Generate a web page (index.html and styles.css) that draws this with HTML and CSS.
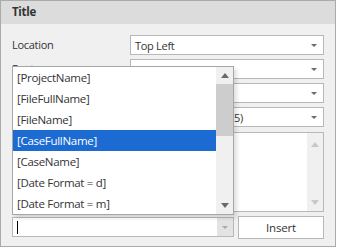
FILE: index.html
```html
<!DOCTYPE html>
<html lang="en">
<head>
    <meta charset="UTF-8">
    <title>Title Settings</title>
    <link rel="stylesheet" href="styles.css">
</head>
<body>
    <div class="panel">
        <div class="panel-header">Title</div>
        <div class="panel-body">
            <div class="form-grid">
                <label class="field-label">Location</label>
                <div class="combo"><span class="combo-text">Top Left</span><span class="arrow"></span></div>

                <label class="field-label">Font</label>
                <div class="combo"><span class="combo-text">Arial [10]</span><span class="arrow"></span></div>

                <label class="field-label"></label>
                <div class="combo"><span class="combo-text"></span><span class="arrow"></span></div>

                <label class="field-label"></label>
                <div class="combo"><span class="combo-text">Default (255, 255, 255)</span><span class="arrow"></span></div>
            </div>

            <div class="memo">
                <div class="memo-scroll">
                    <span class="tri-up light"></span>
                    <span class="tri-down light"></span>
                </div>
            </div>

            <div class="bottom-row">
                <div class="combo combo-edit">
                    <span class="caret"></span>
                    <span class="combo-btn"><span class="arrow light"></span></span>
                </div>
                <button class="insert-btn">Insert</button>
            </div>

            <!-- open dropdown list of the field combo -->
            <div class="popup">
                <ul class="popup-list">
                    <li>[ProjectName]</li>
                    <li>[FileFullName]</li>
                    <li>[FileName]</li>
                    <li class="selected">[CaseFullName]</li>
                    <li>[CaseName]</li>
                    <li>[Date Format = d]</li>
                    <li>[Date Format = m]</li>
                </ul>
                <div class="popup-scroll">
                    <span class="scroll-btn"><span class="tri-up"></span></span>
                    <span class="thumb"></span>
                    <span class="scroll-track"></span>
                    <span class="scroll-btn"><span class="tri-down"></span></span>
                </div>
            </div>
        </div>
    </div>
</body>
</html>
```

FILE: styles.css
```css
body {
    margin: 0;
    font-family: "Open Sans", "Noto Sans", sans-serif;
    font-size: 11px;
    letter-spacing: -0.3px;
    color: #333;
    background: #fff;
}
.panel {
    width: 334px;
    height: 245px;
    border: 1px solid #ababab;
    background: #f0f0f0;
}
.panel-header {
    height: 23px;
    line-height: 22px;
    padding-left: 11px;
    background: #dcdcdc;
    font-weight: bold;
    font-size: 11.5px;
    color: #333;
}
.panel-body {
    position: relative;
    padding: 11px 11px 0 11px;
}
.form-grid {
    display: grid;
    grid-template-columns: 118px 194px;
    row-gap: 4px;
}
.field-label {
    line-height: 20px;
    color: #333;
}
.combo {
    height: 18px;
    border: 1px solid #b8b8b8;
    background: #fff;
    display: flex;
    align-items: center;
    padding-left: 4px;
}
.combo-text {
    flex: 1;
    white-space: nowrap;
    overflow: hidden;
}
.arrow {
    width: 0;
    height: 0;
    margin-right: 6px;
    border-left: 3.5px solid transparent;
    border-right: 3.5px solid transparent;
    border-top: 3.5px solid #6a6a6a;
}
.arrow.light {
    border-top-color: #a8a8a8;
    margin: 0;
}
.memo {
    margin-top: 5px;
    height: 78px;
    border: 1px solid #b8b8b8;
    background: #fff;
    display: flex;
    justify-content: flex-end;
}
.memo-scroll {
    width: 16px;
    background: #f0f0f0;
    display: flex;
    flex-direction: column;
    justify-content: space-between;
    align-items: center;
    padding: 9px 0 6px;
}
.tri-up {
    width: 0;
    height: 0;
    border-left: 4px solid transparent;
    border-right: 4px solid transparent;
    border-bottom: 5px solid #6a6a6a;
}
.tri-down {
    width: 0;
    height: 0;
    border-left: 4px solid transparent;
    border-right: 4px solid transparent;
    border-top: 5px solid #6a6a6a;
}
.tri-up.light {
    border-bottom-color: #c8c8c8;
}
.tri-down.light {
    border-top-color: #c8c8c8;
}
.bottom-row {
    margin-top: 4px;
    display: flex;
    align-items: flex-start;
    gap: 4px;
}
.combo-edit {
    width: 216px;
    margin-top: 1px;
    padding-left: 4px;
}
.caret {
    width: 1px;
    height: 13px;
    background: #000;
    margin-right: auto;
}
.combo-btn {
    width: 16px;
    height: 18px;
    background: #e3e3e3;
    display: flex;
    align-items: center;
    justify-content: center;
}
.insert-btn {
    width: 86px;
    height: 23px;
    border: 1px solid #b8b8b8;
    background: #fff;
    font-family: inherit;
    font-size: 11.5px;
    letter-spacing: -0.2px;
    color: #333;
    padding: 0;
}
.popup {
    position: absolute;
    left: 11px;
    top: 42px;
    width: 220px;
    height: 147px;
    border: 1px solid #a6a6a6;
    background: #fff;
    display: flex;
    box-shadow: 3px 3px 4px rgba(0, 0, 0, 0.12);
}
.popup-list {
    list-style: none;
    margin: 0;
    padding: 0;
    flex: 1;
}
.popup-list li {
    height: 21px;
    line-height: 21px;
    padding-left: 4px;
    font-size: 11.5px;
    color: #333;
}
.popup-list li.selected {
    background: #1c6bd2;
    color: #fff;
}
.popup-scroll {
    width: 17px;
    background: #f0f0f0;
    display: flex;
    flex-direction: column;
}
.scroll-btn {
    height: 17px;
    display: flex;
    align-items: center;
    justify-content: center;
}
.thumb {
    height: 52px;
    background: #cdcdcd;
}
.scroll-track {
    flex: 1;
}
```
